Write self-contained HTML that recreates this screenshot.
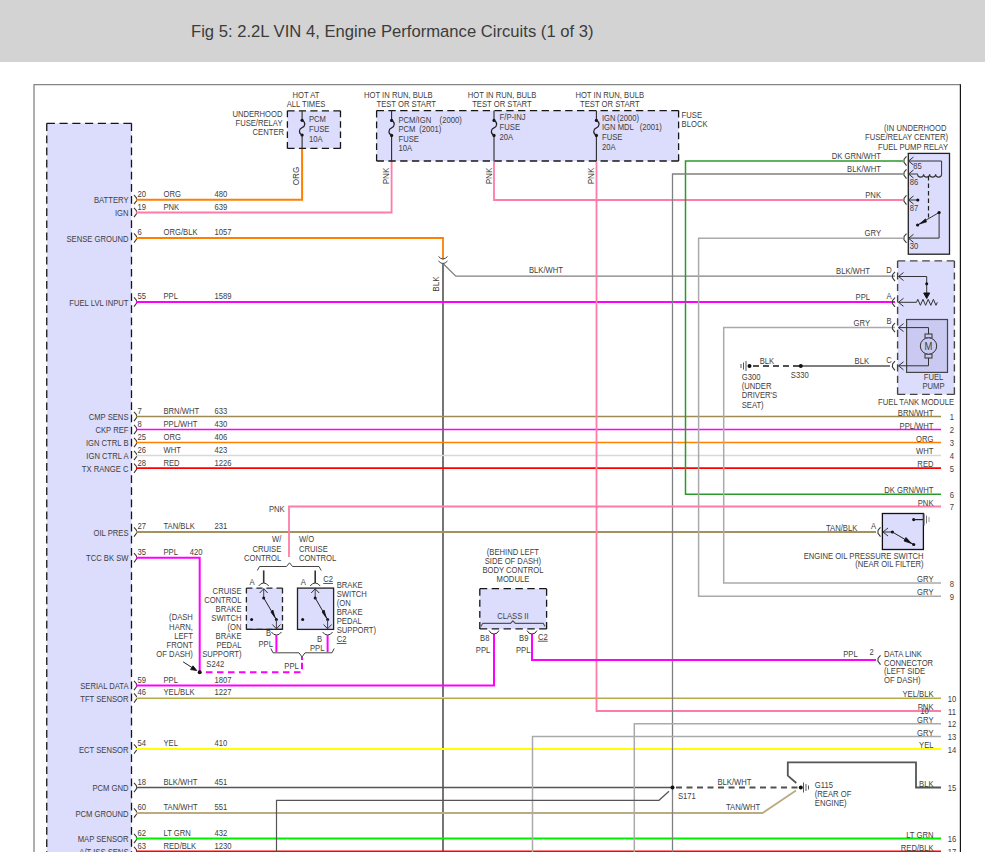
<!DOCTYPE html>
<html><head><meta charset="utf-8"><style>
html,body{margin:0;padding:0;background:#fff;width:985px;height:865px;overflow:hidden}
#hdr{position:absolute;left:0;top:0;width:985px;height:62px;background:#d3d3d3}
#ttl{position:absolute;left:191px;top:20.5px;font-family:"Liberation Sans",sans-serif;font-size:17.2px;color:#3c3c3c;white-space:nowrap;transform:scaleX(0.968);transform-origin:0 0}
svg{position:absolute;left:0;top:0}
svg text{font-family:"Liberation Sans",sans-serif;font-size:8.5px;fill:#404040}
</style></head><body>
<div id="hdr"></div>
<div id="ttl">Fig 5: 2.2L VIN 4, Engine Performance Circuits (1 of 3)</div>
<svg width="985" height="865" viewBox="0 0 985 865">
<defs><clipPath id="cp"><rect x="0" y="62" width="985" height="790"/></clipPath></defs>
<g clip-path="url(#cp)">
<path d="M34 900 L34 84.7 L960.4 84.7" fill="none" stroke="#858585" stroke-width="1.3"/>
<path d="M960.4 84.2 L960.4 900" fill="none" stroke="#151515" stroke-width="1.2"/>
<rect x="46.75" y="123.3" width="84.75" height="760" fill="#dcdcfd"/>
<path d="M46.75 123.3 L131.5 123.3" stroke="#161616" stroke-width="1.3" stroke-dasharray="8.127 4.644" fill="none"/>
<path d="M131.5 123.3 L131.5 883.3" stroke="#161616" stroke-width="1.3" stroke-dasharray="7.721 4.412" fill="none"/>
<path d="M131.5 883.3 L46.75 883.3" stroke="#161616" stroke-width="1.3" stroke-dasharray="8.127 4.644" fill="none"/>
<path d="M46.75 883.3 L46.75 123.3" stroke="#161616" stroke-width="1.3" stroke-dasharray="7.721 4.412" fill="none"/>
<text transform="translate(128.5 203.2) scale(0.9 1)" text-anchor="end">BATTERY</text>
<text transform="translate(137.5 196.9) scale(0.9 1)">20</text>
<text transform="translate(163.5 196.9) scale(0.9 1)">ORG</text>
<text transform="translate(214.5 196.9) scale(0.9 1)">480</text>
<path d="M134 195.0 L136.4 197.79999999999998 L136.6 200.79999999999998 L134 204.2" stroke="#3a3a3a" stroke-width="1.1" fill="none"/>
<text transform="translate(128.5 216.1) scale(0.9 1)" text-anchor="end">IGN</text>
<text transform="translate(137.5 209.8) scale(0.9 1)">19</text>
<text transform="translate(163.5 209.8) scale(0.9 1)">PNK</text>
<text transform="translate(214.5 209.8) scale(0.9 1)">639</text>
<path d="M134 207.9 L136.4 210.7 L136.6 213.7 L134 217.1" stroke="#3a3a3a" stroke-width="1.1" fill="none"/>
<text transform="translate(128.5 241.6) scale(0.9 1)" text-anchor="end">SENSE GROUND</text>
<text transform="translate(137.5 235.3) scale(0.9 1)">6</text>
<text transform="translate(163.5 235.3) scale(0.9 1)">ORG/BLK</text>
<text transform="translate(214.5 235.3) scale(0.9 1)">1057</text>
<path d="M134 233.4 L136.4 236.2 L136.6 239.2 L134 242.6" stroke="#3a3a3a" stroke-width="1.1" fill="none"/>
<text transform="translate(128.5 305.6) scale(0.9 1)" text-anchor="end">FUEL LVL INPUT</text>
<text transform="translate(137.5 299.3) scale(0.9 1)">55</text>
<text transform="translate(163.5 299.3) scale(0.9 1)">PPL</text>
<text transform="translate(214.5 299.3) scale(0.9 1)">1589</text>
<path d="M134 297.4 L136.4 300.2 L136.6 303.2 L134 306.6" stroke="#3a3a3a" stroke-width="1.1" fill="none"/>
<text transform="translate(128.5 420.1) scale(0.9 1)" text-anchor="end">CMP SENS</text>
<text transform="translate(137.5 413.8) scale(0.9 1)">7</text>
<text transform="translate(163.5 413.8) scale(0.9 1)">BRN/WHT</text>
<text transform="translate(214.5 413.8) scale(0.9 1)">633</text>
<path d="M134 411.9 L136.4 414.7 L136.6 417.7 L134 421.1" stroke="#3a3a3a" stroke-width="1.1" fill="none"/>
<text transform="translate(128.5 433.1) scale(0.9 1)" text-anchor="end">CKP REF</text>
<text transform="translate(137.5 426.8) scale(0.9 1)">8</text>
<text transform="translate(163.5 426.8) scale(0.9 1)">PPL/WHT</text>
<text transform="translate(214.5 426.8) scale(0.9 1)">430</text>
<path d="M134 424.9 L136.4 427.7 L136.6 430.7 L134 434.1" stroke="#3a3a3a" stroke-width="1.1" fill="none"/>
<text transform="translate(128.5 446.1) scale(0.9 1)" text-anchor="end">IGN CTRL B</text>
<text transform="translate(137.5 439.8) scale(0.9 1)">25</text>
<text transform="translate(163.5 439.8) scale(0.9 1)">ORG</text>
<text transform="translate(214.5 439.8) scale(0.9 1)">406</text>
<path d="M134 437.9 L136.4 440.7 L136.6 443.7 L134 447.1" stroke="#3a3a3a" stroke-width="1.1" fill="none"/>
<text transform="translate(128.5 459.1) scale(0.9 1)" text-anchor="end">IGN CTRL A</text>
<text transform="translate(137.5 452.8) scale(0.9 1)">26</text>
<text transform="translate(163.5 452.8) scale(0.9 1)">WHT</text>
<text transform="translate(214.5 452.8) scale(0.9 1)">423</text>
<path d="M134 450.9 L136.4 453.7 L136.6 456.7 L134 460.1" stroke="#3a3a3a" stroke-width="1.1" fill="none"/>
<text transform="translate(128.5 471.8) scale(0.9 1)" text-anchor="end">TX RANGE C</text>
<text transform="translate(137.5 465.5) scale(0.9 1)">28</text>
<text transform="translate(163.5 465.5) scale(0.9 1)">RED</text>
<text transform="translate(214.5 465.5) scale(0.9 1)">1226</text>
<path d="M134 463.59999999999997 L136.4 466.4 L136.6 469.4 L134 472.8" stroke="#3a3a3a" stroke-width="1.1" fill="none"/>
<text transform="translate(128.5 535.6) scale(0.9 1)" text-anchor="end">OIL PRES</text>
<text transform="translate(137.5 529.3) scale(0.9 1)">27</text>
<text transform="translate(163.5 529.3) scale(0.9 1)">TAN/BLK</text>
<text transform="translate(214.5 529.3) scale(0.9 1)">231</text>
<path d="M134 527.4 L136.4 530.2 L136.6 533.2 L134 536.6" stroke="#3a3a3a" stroke-width="1.1" fill="none"/>
<text transform="translate(128.5 561.3000000000001) scale(0.9 1)" text-anchor="end">TCC BK SW</text>
<text transform="translate(137.5 555.0) scale(0.9 1)">35</text>
<text transform="translate(163.5 555.0) scale(0.9 1)">PPL</text>
<text transform="translate(189.7 555.0) scale(0.9 1)">420</text>
<path d="M134 553.1 L136.4 555.9000000000001 L136.6 558.9000000000001 L134 562.3000000000001" stroke="#3a3a3a" stroke-width="1.1" fill="none"/>
<text transform="translate(128.5 689.1) scale(0.9 1)" text-anchor="end">SERIAL DATA</text>
<text transform="translate(137.5 682.8) scale(0.9 1)">59</text>
<text transform="translate(163.5 682.8) scale(0.9 1)">PPL</text>
<text transform="translate(214.5 682.8) scale(0.9 1)">1807</text>
<path d="M134 680.9 L136.4 683.7 L136.6 686.7 L134 690.1" stroke="#3a3a3a" stroke-width="1.1" fill="none"/>
<text transform="translate(128.5 701.6) scale(0.9 1)" text-anchor="end">TFT SENSOR</text>
<text transform="translate(137.5 695.3) scale(0.9 1)">46</text>
<text transform="translate(163.5 695.3) scale(0.9 1)">YEL/BLK</text>
<text transform="translate(214.5 695.3) scale(0.9 1)">1227</text>
<path d="M134 693.4 L136.4 696.2 L136.6 699.2 L134 702.6" stroke="#3a3a3a" stroke-width="1.1" fill="none"/>
<text transform="translate(128.5 752.6) scale(0.9 1)" text-anchor="end">ECT SENSOR</text>
<text transform="translate(137.5 746.3) scale(0.9 1)">54</text>
<text transform="translate(163.5 746.3) scale(0.9 1)">YEL</text>
<text transform="translate(214.5 746.3) scale(0.9 1)">410</text>
<path d="M134 744.4 L136.4 747.2 L136.6 750.2 L134 753.6" stroke="#3a3a3a" stroke-width="1.1" fill="none"/>
<text transform="translate(128.5 791.1) scale(0.9 1)" text-anchor="end">PCM GND</text>
<text transform="translate(137.5 784.8) scale(0.9 1)">18</text>
<text transform="translate(163.5 784.8) scale(0.9 1)">BLK/WHT</text>
<text transform="translate(214.5 784.8) scale(0.9 1)">451</text>
<path d="M134 782.9 L136.4 785.7 L136.6 788.7 L134 792.1" stroke="#3a3a3a" stroke-width="1.1" fill="none"/>
<text transform="translate(128.5 816.6) scale(0.9 1)" text-anchor="end">PCM GROUND</text>
<text transform="translate(137.5 810.3) scale(0.9 1)">60</text>
<text transform="translate(163.5 810.3) scale(0.9 1)">TAN/WHT</text>
<text transform="translate(214.5 810.3) scale(0.9 1)">551</text>
<path d="M134 808.4 L136.4 811.2 L136.6 814.2 L134 817.6" stroke="#3a3a3a" stroke-width="1.1" fill="none"/>
<text transform="translate(128.5 842.1) scale(0.9 1)" text-anchor="end">MAP SENSOR</text>
<text transform="translate(137.5 835.8) scale(0.9 1)">62</text>
<text transform="translate(163.5 835.8) scale(0.9 1)">LT GRN</text>
<text transform="translate(214.5 835.8) scale(0.9 1)">432</text>
<path d="M134 833.9 L136.4 836.7 L136.6 839.7 L134 843.1" stroke="#3a3a3a" stroke-width="1.1" fill="none"/>
<text transform="translate(128.5 855.1) scale(0.9 1)" text-anchor="end">A/T ISS SENS</text>
<text transform="translate(137.5 848.8) scale(0.9 1)">63</text>
<text transform="translate(163.5 848.8) scale(0.9 1)">RED/BLK</text>
<text transform="translate(214.5 848.8) scale(0.9 1)">1230</text>
<path d="M134 846.9 L136.4 849.7 L136.6 852.7 L134 856.1" stroke="#3a3a3a" stroke-width="1.1" fill="none"/>
<path d="M136 199.8 L302.1 199.8 L302.1 148.5" stroke="#ff8000" stroke-width="2" fill="none"/>
<path d="M136 212.5 L391.6 212.5 L391.6 161" stroke="#ff7ca6" stroke-width="1.8" fill="none"/>
<path d="M136 238 L443 238 L443 259.5" stroke="#ff8000" stroke-width="1.8" fill="none"/>
<path d="M443 264 L443 852" stroke="#666" stroke-width="1.8" fill="none"/>
<path d="M443.5 264 L455.8 276.2 L895 276.2" stroke="#808080" stroke-width="1.3" fill="none"/>
<path d="M136 302 L895 302" stroke="#ff00ff" stroke-width="2" fill="none"/>
<path d="M136 416.5 L941 416.5" stroke="#9e8a55" stroke-width="1.5" fill="none"/>
<path d="M136 429.5 L941 429.5" stroke="#ff00ff" stroke-width="1.4" fill="none"/>
<path d="M136 442.5 L941 442.5" stroke="#ff8000" stroke-width="1.7" fill="none"/>
<path d="M136 455.5 L941 455.5" stroke="#d8d8d8" stroke-width="1.5" fill="none"/>
<path d="M136 468.2 L941 468.2" stroke="#ff0000" stroke-width="1.8" fill="none"/>
<path d="M136 532 L876 532" stroke="#a4915f" stroke-width="1.8" fill="none"/>
<path d="M136 557.7 L199.7 557.7 L199.7 672.3" stroke="#ff00ff" stroke-width="2" fill="none"/>
<path d="M136 685.5 L494 685.5 L494 634" stroke="#ff00ff" stroke-width="2" fill="none"/>
<path d="M136 697.5 L941 697.5" stroke="#ece23c" stroke-width="1.1" fill="none"/>
<path d="M136 698.5 L941 698.5" stroke="#b4aa48" stroke-width="1.0" fill="none"/>
<path d="M136 749 L941 749" stroke="#ffff00" stroke-width="2" fill="none"/>
<path d="M136 787.5 L672.5 787.5" stroke="#555555" stroke-width="1.3" fill="none"/>
<path d="M136 813 L762.5 813 L796 790.5" stroke="#bcab80" stroke-width="1.8" fill="none"/>
<path d="M136 838.5 L941 838.5" stroke="#00f000" stroke-width="2" fill="none"/>
<path d="M136 851.5 L941 851.5" stroke="#ff0000" stroke-width="2" fill="none"/>
<path d="M494 161 L494 200 L903 200" stroke="#ff7ca6" stroke-width="1.8" fill="none"/>
<path d="M596.5 161 L596.5 711 L941 711" stroke="#ff7ca6" stroke-width="1.8" fill="none"/>
<path d="M903 161 L685.5 161 L685.5 494.3 L941 494.3" stroke="#2a9a2a" stroke-width="1.5" fill="none"/>
<path d="M903 174 L672.5 174 L672.5 852" stroke="#808080" stroke-width="1.3" fill="none"/>
<path d="M903 238.3 L698.6 238.3 L698.6 596.3 L941 596.3" stroke="#aaaaaa" stroke-width="1.5" fill="none"/>
<path d="M895 327.6 L723.7 327.6 L723.7 583.1 L941 583.1" stroke="#aaaaaa" stroke-width="1.5" fill="none"/>
<path d="M289 557 L289 506.5 L941 506.5" stroke="#ff7ca6" stroke-width="1.8" fill="none"/>
<path d="M634.3 852 L634.3 723.7 L941 723.7" stroke="#aaaaaa" stroke-width="1.5" fill="none"/>
<path d="M532.5 852 L532.5 736.5 L941 736.5" stroke="#aaaaaa" stroke-width="1.5" fill="none"/>
<path d="M532 634 L532 660 L876 660" stroke="#ff00ff" stroke-width="2" fill="none"/>
<path d="M941 787.5 L916 787.5 L916 762.3 L787.8 762.3 L787.8 775.7 L796.3 783" stroke="#555555" stroke-width="1.8" fill="none"/>
<path d="M676 787.5 L800.8 787.5" stroke="#505050" stroke-width="1.8" fill="none" stroke-dasharray="6 4.5"/>
<path d="M276.5 852 L276.5 800.3 L659 800.3 L669 791.3" stroke="#555555" stroke-width="1.2" fill="none"/>
<path d="M753 366 L800.8 366" stroke="#505050" stroke-width="1.8" fill="none" stroke-dasharray="6 4"/>
<path d="M800.8 366 L890 366" stroke="#555555" stroke-width="1.6" fill="none"/>
<circle cx="672.5" cy="787.5" r="2" fill="#111"/>
<circle cx="800.8" cy="787.5" r="2" fill="#111"/>
<circle cx="749.5" cy="366" r="2" fill="#111"/>
<circle cx="800.8" cy="366" r="2" fill="#111"/>
<circle cx="199.7" cy="672.3" r="2" fill="#111"/>
<path d="M206 672.3 L302 672.3 L302 660" stroke="#ff00ff" stroke-width="2" fill="none" stroke-dasharray="6.5 4.5"/>
<rect x="287.4" y="110.8" width="53.1" height="37.6" fill="#dcdcfd"/>
<path d="M287.4 110.8 L340.5 110.8" stroke="#161616" stroke-width="1.3" stroke-dasharray="7.176 4.305" fill="none"/>
<path d="M340.5 110.8 L340.5 148.4" stroke="#161616" stroke-width="1.3" stroke-dasharray="6.483 3.890" fill="none"/>
<path d="M340.5 148.4 L287.4 148.4" stroke="#161616" stroke-width="1.3" stroke-dasharray="7.176 4.305" fill="none"/>
<path d="M287.4 148.4 L287.4 110.8" stroke="#161616" stroke-width="1.3" stroke-dasharray="6.483 3.890" fill="none"/>
<path d="M302.1 110.8 L302.1 120.3" stroke="#2a2a2a" stroke-width="1.1" fill="none"/>
<path d="M302.1 135 L302.1 148.4" stroke="#2a2a2a" stroke-width="1.1" fill="none"/>
<circle cx="302.1" cy="120.3" r="1.6" fill="#111"/>
<circle cx="302.1" cy="135" r="1.6" fill="#111"/>
<path d="M302.1 120.3 C306.1 122.3 305.1 126.65 302.1 127.65 C299.1 128.65 298.1 133 302.1 135" stroke="#222" stroke-width="1.2" fill="none"/>
<text transform="translate(309 122.4) scale(0.9 1)">PCM</text>
<text transform="translate(309 132.0) scale(0.9 1)">FUSE</text>
<text transform="translate(309 141.6) scale(0.9 1)">10A</text>
<text transform="translate(306 97.8) scale(0.9 1)" text-anchor="middle">HOT AT</text>
<text transform="translate(306 106.9) scale(0.9 1)" text-anchor="middle">ALL TIMES</text>
<text transform="translate(282.5 116.9) scale(0.9 1)" text-anchor="end">UNDERHOOD</text>
<text transform="translate(282.5 126.0) scale(0.9 1)" text-anchor="end">FUSE/RELAY</text>
<text transform="translate(284 135) scale(0.9 1)" text-anchor="end">CENTER</text>
<rect x="376.6" y="110.6" width="302" height="50.4" fill="#dcdcfd"/>
<path d="M376.6 110.6 L678.6 110.6" stroke="#161616" stroke-width="1.3" stroke-dasharray="7.366 4.420" fill="none"/>
<path d="M678.6 110.6 L678.6 161.0" stroke="#161616" stroke-width="1.3" stroke-dasharray="6.811 4.086" fill="none"/>
<path d="M678.6 161.0 L376.6 161.0" stroke="#161616" stroke-width="1.3" stroke-dasharray="7.366 4.420" fill="none"/>
<path d="M376.6 161.0 L376.6 110.6" stroke="#161616" stroke-width="1.3" stroke-dasharray="6.811 4.086" fill="none"/>
<path d="M391.6 110.6 L391.6 120.4" stroke="#2a2a2a" stroke-width="1.1" fill="none"/>
<path d="M391.6 135.4 L391.6 161" stroke="#2a2a2a" stroke-width="1.1" fill="none"/>
<circle cx="391.6" cy="120.4" r="1.6" fill="#111"/>
<circle cx="391.6" cy="135.4" r="1.6" fill="#111"/>
<path d="M391.6 120.4 C395.6 122.4 394.6 126.9 391.6 127.9 C388.6 128.9 387.6 133.4 391.6 135.4" stroke="#222" stroke-width="1.2" fill="none"/>
<path d="M494 110.6 L494 120.4" stroke="#2a2a2a" stroke-width="1.1" fill="none"/>
<path d="M494 135.4 L494 161" stroke="#2a2a2a" stroke-width="1.1" fill="none"/>
<circle cx="494" cy="120.4" r="1.6" fill="#111"/>
<circle cx="494" cy="135.4" r="1.6" fill="#111"/>
<path d="M494 120.4 C498 122.4 497 126.9 494 127.9 C491 128.9 490 133.4 494 135.4" stroke="#222" stroke-width="1.2" fill="none"/>
<path d="M596.4 110.6 L596.4 120.4" stroke="#2a2a2a" stroke-width="1.1" fill="none"/>
<path d="M596.4 135.4 L596.4 161" stroke="#2a2a2a" stroke-width="1.1" fill="none"/>
<circle cx="596.4" cy="120.4" r="1.6" fill="#111"/>
<circle cx="596.4" cy="135.4" r="1.6" fill="#111"/>
<path d="M596.4 120.4 C600.4 122.4 599.4 126.9 596.4 127.9 C593.4 128.9 592.4 133.4 596.4 135.4" stroke="#222" stroke-width="1.2" fill="none"/>
<text transform="translate(398.5 122.6) scale(0.9 1)">PCM/IGN</text>
<text transform="translate(398.5 132.2) scale(0.9 1)">PCM</text>
<text transform="translate(398.5 141.8) scale(0.9 1)">FUSE</text>
<text transform="translate(398.5 151.4) scale(0.9 1)">10A</text>
<text transform="translate(439.6 122.6) scale(0.9 1)">(2000)</text>
<text transform="translate(419.2 132.2) scale(0.9 1)">(2001)</text>
<text transform="translate(499.6 120.4) scale(0.9 1)">F/P-INJ</text>
<text transform="translate(499.6 130.2) scale(0.9 1)">FUSE</text>
<text transform="translate(499.6 140.0) scale(0.9 1)">20A</text>
<text transform="translate(602 120.8) scale(0.9 1)">IGN</text>
<text transform="translate(602 130.37) scale(0.9 1)">IGN MDL</text>
<text transform="translate(602 139.94) scale(0.9 1)">FUSE</text>
<text transform="translate(602 149.51) scale(0.9 1)">20A</text>
<text transform="translate(617 120.8) scale(0.9 1)">(2000)</text>
<text transform="translate(639.7 130.4) scale(0.9 1)">(2001)</text>
<text transform="translate(681.6 117.7) scale(0.9 1)">FUSE</text>
<text transform="translate(681.6 126.5) scale(0.9 1)">BLOCK</text>
<text transform="translate(364 98) scale(0.9 1)">HOT IN RUN, BULB</text>
<text transform="translate(376.5 106.8) scale(0.9 1)">TEST OR START</text>
<text transform="translate(467.8 98) scale(0.9 1)">HOT IN RUN, BULB</text>
<text transform="translate(472.2 106.8) scale(0.9 1)">TEST OR START</text>
<text transform="translate(575.4 98) scale(0.9 1)">HOT IN RUN, BULB</text>
<text transform="translate(580.1 106.8) scale(0.9 1)">TEST OR START</text>
<text transform="translate(299 176) rotate(-90) scale(0.9 1)" text-anchor="middle" style="font-size:9px">ORG</text>
<text transform="translate(389 176) rotate(-90) scale(0.9 1)" text-anchor="middle" style="font-size:9px">PNK</text>
<text transform="translate(491.5 176) rotate(-90) scale(0.9 1)" text-anchor="middle" style="font-size:9px">PNK</text>
<text transform="translate(594 176) rotate(-90) scale(0.9 1)" text-anchor="middle" style="font-size:9px">PNK</text>
<text transform="translate(439 284) rotate(-90) scale(0.9 1)" text-anchor="middle" style="font-size:9px">BLK</text>
<path d="M438.5 256.5 Q443 261.5 447.5 256.5" stroke="#444" stroke-width="1" fill="none"/>
<path d="M438.5 261 Q443 266 447.5 261" stroke="#444" stroke-width="1" fill="none"/>
<text transform="translate(529 273.3) scale(0.9 1)">BLK/WHT</text>
<text transform="translate(946.5 130.9) scale(0.9 1)" text-anchor="end">(IN UNDERHOOD</text>
<text transform="translate(948 140.4) scale(0.9 1)" text-anchor="end">FUSE/RELAY CENTER)</text>
<text transform="translate(948 150.2) scale(0.9 1)" text-anchor="end">FUEL PUMP RELAY</text>
<rect x="908.3" y="153.4" width="41.2" height="100.8" fill="#dcdcfd" stroke="#222" stroke-width="1.3"/>
<path d="M906.5 156.4 L904.1 159.2 L903.9 162.2 L906.5 165.6" stroke="#3a3a3a" stroke-width="1.1" fill="none"/>
<path d="M913.5 157 L908.5 161 L913.5 165" stroke="#333" stroke-width="1" fill="none"/>
<path d="M906.5 169.4 L904.1 172.2 L903.9 175.2 L906.5 178.6" stroke="#3a3a3a" stroke-width="1.1" fill="none"/>
<path d="M913.5 170 L908.5 174 L913.5 178" stroke="#333" stroke-width="1" fill="none"/>
<path d="M906.5 195.4 L904.1 198.2 L903.9 201.2 L906.5 204.6" stroke="#3a3a3a" stroke-width="1.1" fill="none"/>
<path d="M913.5 196 L908.5 200 L913.5 204" stroke="#333" stroke-width="1" fill="none"/>
<path d="M906.5 233.70000000000002 L904.1 236.5 L903.9 239.5 L906.5 242.9" stroke="#3a3a3a" stroke-width="1.1" fill="none"/>
<path d="M913.5 234.3 L908.5 238.3 L913.5 242.3" stroke="#333" stroke-width="1" fill="none"/>
<path d="M908.5 161 L941.6 161 L941.6 174.5" stroke="#333" stroke-width="1" fill="none"/>
<path d="M908.5 174 L917.8 174" stroke="#333" stroke-width="1" fill="none"/>
<path d="M917.6 174.3 a3 2.8 0 0 0 6 0 a3 2.8 0 0 0 6 0 a3 2.8 0 0 0 6 0 a3 2.8 0 0 0 6 0" stroke="#333" stroke-width="1.1" fill="none"/>
<path d="M928.5 176 L928.5 217.5" stroke="#222" stroke-width="1.2" fill="none" stroke-dasharray="4.5 3"/>
<path d="M908.5 200 L917.8 200" stroke="#333" stroke-width="1" fill="none"/>
<circle cx="917.8" cy="200" r="1.6" fill="#111"/>
<path d="M917.6 225 L939.1 212.5 L939.1 238.1 L908.5 238.1" stroke="#333" stroke-width="1" fill="none"/>
<circle cx="917.6" cy="225" r="1.6" fill="#111"/>
<circle cx="939.1" cy="212.5" r="1.6" fill="#111"/>
<path d="M919.5 224 L925.5 218.8 L926.5 222 Z" stroke="#111" stroke-width="0.6" fill="#111"/>
<text transform="translate(913.3 169.4) scale(0.9 1)">85</text>
<text transform="translate(909.7 185.3) scale(0.9 1)">86</text>
<text transform="translate(909.7 211.3) scale(0.9 1)">87</text>
<text transform="translate(909.7 249) scale(0.9 1)">30</text>
<text transform="translate(881 159.4) scale(0.9 1)" text-anchor="end">DK GRN/WHT</text>
<text transform="translate(881 172) scale(0.9 1)" text-anchor="end">BLK/WHT</text>
<text transform="translate(881 198) scale(0.9 1)" text-anchor="end">PNK</text>
<text transform="translate(881 236.4) scale(0.9 1)" text-anchor="end">GRY</text>
<rect x="897.6" y="260.9" width="56.8" height="133.5" fill="#dcdcfd"/>
<path d="M897.6 260.9 L954.4 260.9" stroke="#444" stroke-width="1.4" stroke-dasharray="7.676 4.605" fill="none"/>
<path d="M954.4 260.9 L954.4 394.4" stroke="#444" stroke-width="1.4" stroke-dasharray="7.177 4.306" fill="none"/>
<path d="M954.4 394.4 L897.6 394.4" stroke="#444" stroke-width="1.4" stroke-dasharray="7.676 4.605" fill="none"/>
<path d="M897.6 394.4 L897.6 260.9" stroke="#444" stroke-width="1.4" stroke-dasharray="7.177 4.306" fill="none"/>
<rect x="906.6" y="319.5" width="40.9" height="52.9" fill="#c9c9f2" stroke="#444" stroke-width="1.2"/>
<path d="M895 271.9 L892.6 274.7 L892.4 277.7 L895 281.1" stroke="#3a3a3a" stroke-width="1.1" fill="none"/>
<path d="M903.5 272.5 L898.5 276.5 L903.5 280.5" stroke="#333" stroke-width="1" fill="none"/>
<text transform="translate(889 273.3) scale(0.9 1)" text-anchor="middle">D</text>
<path d="M895 297.7 L892.6 300.5 L892.4 303.5 L895 306.90000000000003" stroke="#3a3a3a" stroke-width="1.1" fill="none"/>
<path d="M903.5 298.3 L898.5 302.3 L903.5 306.3" stroke="#333" stroke-width="1" fill="none"/>
<text transform="translate(889 299.1) scale(0.9 1)" text-anchor="middle">A</text>
<path d="M895 323.0 L892.6 325.8 L892.4 328.8 L895 332.20000000000005" stroke="#3a3a3a" stroke-width="1.1" fill="none"/>
<path d="M903.5 323.6 L898.5 327.6 L903.5 331.6" stroke="#333" stroke-width="1" fill="none"/>
<text transform="translate(889 324.40000000000003) scale(0.9 1)" text-anchor="middle">B</text>
<path d="M895 361.2 L892.6 364.0 L892.4 367.0 L895 370.40000000000003" stroke="#3a3a3a" stroke-width="1.1" fill="none"/>
<path d="M903.5 361.8 L898.5 365.8 L903.5 369.8" stroke="#333" stroke-width="1" fill="none"/>
<text transform="translate(889 362.6) scale(0.9 1)" text-anchor="middle">C</text>
<path d="M898.5 276.5 L926.7 276.5 L926.7 296" stroke="#333" stroke-width="1" fill="none"/>
<circle cx="926.7" cy="283.7" r="1.5" fill="#111"/>
<path d="M923.7 293 L926.7 298.5 L929.7 293 Z" stroke="#111" stroke-width="1" fill="#111"/>
<path d="M898.5 302.3 L916.5 302.3" stroke="#333" stroke-width="1" fill="none"/>
<path d="M916.5 302.3 l1.3 -3 l2.6 6 l2.6 -6 l2.6 6 l2.6 -6 l2.6 6 l2.6 -6 l2.6 6 l1.3 -3" stroke="#333" stroke-width="1" fill="none"/>
<path d="M898.5 327.6 L928.5 327.6 L928.5 334" stroke="#333" stroke-width="1" fill="none"/>
<path d="M898.5 365.8 L928.5 365.8 L928.5 358" stroke="#333" stroke-width="1" fill="none"/>
<rect x="925" y="334" width="7" height="4" fill="none" stroke="#333" stroke-width="1"/>
<rect x="925" y="354" width="7" height="4" fill="none" stroke="#333" stroke-width="1"/>
<circle cx="928.5" cy="346" r="8.2" fill="#c9c9f2" stroke="#333" stroke-width="1"/>
<text transform="translate(928.5 350) scale(0.9 1)" text-anchor="middle" style="font-size:10.5px">M</text>
<text transform="translate(933.5 380.0) scale(0.9 1)" text-anchor="middle">FUEL</text>
<text transform="translate(933.5 388.5) scale(0.9 1)" text-anchor="middle">PUMP</text>
<text transform="translate(954 404.6) scale(0.9 1)" text-anchor="end">FUEL TANK MODULE</text>
<text transform="translate(870 274) scale(0.9 1)" text-anchor="end">BLK/WHT</text>
<text transform="translate(870 300) scale(0.9 1)" text-anchor="end">PPL</text>
<text transform="translate(870 325.5) scale(0.9 1)" text-anchor="end">GRY</text>
<text transform="translate(869 363.5) scale(0.9 1)" text-anchor="end">BLK</text>
<path d="M746 361 L746 371" stroke="#555" stroke-width="1" fill="none"/>
<path d="M743.5 362.5 L743.5 369.5" stroke="#555" stroke-width="1" fill="none"/>
<path d="M741 364 L741 368" stroke="#555" stroke-width="1" fill="none"/>
<text transform="translate(759.7 363.5) scale(0.9 1)">BLK</text>
<text transform="translate(790.8 377.6) scale(0.9 1)">S330</text>
<text transform="translate(741.7 380.2) scale(0.9 1)">G300</text>
<text transform="translate(741.7 389.3) scale(0.9 1)">(UNDER</text>
<text transform="translate(741.7 398.4) scale(0.9 1)">DRIVER'S</text>
<text transform="translate(741.7 407.5) scale(0.9 1)">SEAT)</text>
<text transform="translate(933.5 415.5) scale(0.9 1)" text-anchor="end">BRN/WHT</text>
<text transform="translate(952 420.0) scale(0.9 1)" text-anchor="middle">1</text>
<text transform="translate(933.5 428.6) scale(0.9 1)" text-anchor="end">PPL/WHT</text>
<text transform="translate(952 433.1) scale(0.9 1)" text-anchor="middle">2</text>
<text transform="translate(933.5 441.5) scale(0.9 1)" text-anchor="end">ORG</text>
<text transform="translate(952 446.0) scale(0.9 1)" text-anchor="middle">3</text>
<text transform="translate(933.5 454.1) scale(0.9 1)" text-anchor="end">WHT</text>
<text transform="translate(952 458.6) scale(0.9 1)" text-anchor="middle">4</text>
<text transform="translate(933.5 467.2) scale(0.9 1)" text-anchor="end">RED</text>
<text transform="translate(952 471.7) scale(0.9 1)" text-anchor="middle">5</text>
<text transform="translate(933.5 493.3) scale(0.9 1)" text-anchor="end">DK GRN/WHT</text>
<text transform="translate(952 497.8) scale(0.9 1)" text-anchor="middle">6</text>
<text transform="translate(933.5 505.5) scale(0.9 1)" text-anchor="end">PNK</text>
<text transform="translate(952 510.0) scale(0.9 1)" text-anchor="middle">7</text>
<text transform="translate(933.5 582.1) scale(0.9 1)" text-anchor="end">GRY</text>
<text transform="translate(952 586.6) scale(0.9 1)" text-anchor="middle">8</text>
<text transform="translate(933.5 595.3) scale(0.9 1)" text-anchor="end">GRY</text>
<text transform="translate(952 599.8) scale(0.9 1)" text-anchor="middle">9</text>
<text transform="translate(933.5 697.0) scale(0.9 1)" text-anchor="end">YEL/BLK</text>
<text transform="translate(952 701.5) scale(0.9 1)" text-anchor="middle">10</text>
<text transform="translate(933.5 710.0) scale(0.9 1)" text-anchor="end">PNK</text>
<text transform="translate(952 714.5) scale(0.9 1)" text-anchor="middle">11</text>
<text transform="translate(933.5 722.7) scale(0.9 1)" text-anchor="end">GRY</text>
<text transform="translate(952 727.2) scale(0.9 1)" text-anchor="middle">12</text>
<text transform="translate(933.5 735.5) scale(0.9 1)" text-anchor="end">GRY</text>
<text transform="translate(952 740.0) scale(0.9 1)" text-anchor="middle">13</text>
<text transform="translate(933.5 748.2) scale(0.9 1)" text-anchor="end">YEL</text>
<text transform="translate(952 752.7) scale(0.9 1)" text-anchor="middle">14</text>
<text transform="translate(933.5 786.5) scale(0.9 1)" text-anchor="end">BLK</text>
<text transform="translate(952 791.0) scale(0.9 1)" text-anchor="middle">15</text>
<text transform="translate(933.5 837.5) scale(0.9 1)" text-anchor="end">LT GRN</text>
<text transform="translate(952 842.0) scale(0.9 1)" text-anchor="middle">16</text>
<text transform="translate(933.5 850.5) scale(0.9 1)" text-anchor="end">RED/BLK</text>
<text transform="translate(952 855.0) scale(0.9 1)" text-anchor="middle">17</text>
<text transform="translate(920.2 713.8) scale(0.9 1)">10</text>
<rect x="882.4" y="513.5" width="41" height="36" fill="#dcdcfd" stroke="#111" stroke-width="1.3"/>
<path d="M880.5 527.4 L878.1 530.2 L877.9 533.2 L880.5 536.6" stroke="#3a3a3a" stroke-width="1.1" fill="none"/>
<path d="M888 528 L883 532 L888 536" stroke="#333" stroke-width="1" fill="none"/>
<path d="M883 532 L892.4 532" stroke="#333" stroke-width="1" fill="none"/>
<circle cx="892.4" cy="532" r="1.6" fill="#111"/>
<path d="M892.4 532 L913.7 544.5" stroke="#222" stroke-width="1" fill="none"/>
<path d="M906 537.5 L911.5 543.5 L904 541 Z" stroke="#111" stroke-width="0.8" fill="#111"/>
<circle cx="913.7" cy="544.5" r="1.6" fill="#111"/>
<circle cx="913.7" cy="519.6" r="1.6" fill="#111"/>
<path d="M913.7 519.6 L924 519.6" stroke="#222" stroke-width="1.2" fill="none"/>
<path d="M924 513.5 L924 525.5" stroke="#555" stroke-width="1.2" fill="none"/>
<path d="M926.5 515.5 L926.5 523.5" stroke="#777" stroke-width="1" fill="none"/>
<path d="M929 517 L929 522" stroke="#999" stroke-width="1" fill="none"/>
<text transform="translate(826 530.6) scale(0.9 1)">TAN/BLK</text>
<text transform="translate(871 529) scale(0.9 1)">A</text>
<text transform="translate(923.6 558.5) scale(0.9 1)" text-anchor="end">ENGINE OIL PRESSURE SWITCH</text>
<text transform="translate(923.6 567.2) scale(0.9 1)" text-anchor="end">(NEAR OIL FILTER)</text>
<text transform="translate(268.9 512.4) scale(0.9 1)">PNK</text>
<text transform="translate(281.3 542.4) scale(0.9 1)" text-anchor="end">W/</text>
<text transform="translate(281.3 551.7) scale(0.9 1)" text-anchor="end">CRUISE</text>
<text transform="translate(281.3 561.0) scale(0.9 1)" text-anchor="end">CONTROL</text>
<text transform="translate(298.9 542.4) scale(0.9 1)">W/O</text>
<text transform="translate(298.9 551.7) scale(0.9 1)">CRUISE</text>
<text transform="translate(298.9 561.0) scale(0.9 1)">CONTROL</text>
<path d="M257.3 570.5 L259.5 566.5 L286.5 566.5 L289.5 562.8 L292.5 566.5 L319 566.5 L321.2 570.5" stroke="#444" stroke-width="1" fill="none"/>
<path d="M270.9 648.5 L273 652.8 L299 652.8 L302 657 L305 652.8 L332 652.8 L334.2 648.5" stroke="#444" stroke-width="1" fill="none"/>
<path d="M302 657 L302 660" stroke="#ff00ff" stroke-width="2" fill="none"/>
<rect x="246.4" y="588.1" width="36.1" height="41.3" fill="#dcdcfd"/>
<path d="M246.4 588.1 L282.5 588.1" stroke="#222" stroke-width="1.3" stroke-dasharray="6.017 4.011" fill="none"/>
<path d="M282.5 588.1 L282.5 629.4" stroke="#222" stroke-width="1.3" stroke-dasharray="5.387 3.591" fill="none"/>
<path d="M282.5 629.4 L246.4 629.4" stroke="#222" stroke-width="1.3" stroke-dasharray="6.017 4.011" fill="none"/>
<path d="M246.4 629.4 L246.4 588.1" stroke="#222" stroke-width="1.3" stroke-dasharray="5.387 3.591" fill="none"/>
<path d="M263.7 570.4 L263.7 583" stroke="#333" stroke-width="1.6" fill="none"/>
<path d="M258.7 586 Q260.7 583 263.7 583 Q266.7 583 268.7 586" stroke="#333" stroke-width="1" fill="none"/>
<path d="M263.7 588.5 L263.7 597.9" stroke="#444" stroke-width="1" fill="none"/>
<path d="M259.7 593 L263.7 588.8 L267.7 593" stroke="#333" stroke-width="1" fill="none"/>
<circle cx="263.7" cy="597.9" r="1.5" fill="#111"/>
<path d="M263.7 597.9 L276.4 619.5" stroke="#222" stroke-width="1" fill="none"/>
<path d="M270.9 612 L274.9 617.5 L272.9 610 Z" stroke="#111" stroke-width="0.8" fill="#111"/>
<circle cx="276.4" cy="619.5" r="1.5" fill="#111"/>
<path d="M276.4 619.5 L276.4 628.8" stroke="#444" stroke-width="1" fill="none"/>
<path d="M272.4 624.5 L276.4 628.8 L280.4 624.5" stroke="#333" stroke-width="1" fill="none"/>
<circle cx="251.6" cy="619.5" r="1.5" fill="#111"/>
<path d="M271.4 632 Q273.4 635 276.4 635 Q279.4 635 281.4 632" stroke="#333" stroke-width="1" fill="none"/>
<path d="M276.4 635 L276.4 652" stroke="#ff00ff" stroke-width="2" fill="none"/>
<path d="M246.4 629.4 L282.5 629.4" stroke="#222" stroke-width="1.2" fill="none"/>
<rect x="297.5" y="588.1" width="36.1" height="41.3" fill="#dcdcfd" stroke="#222" stroke-width="1.3"/>
<path d="M315.2 570.4 L315.2 583" stroke="#333" stroke-width="1.6" fill="none"/>
<path d="M310.2 586 Q312.2 583 315.2 583 Q318.2 583 320.2 586" stroke="#333" stroke-width="1" fill="none"/>
<path d="M315.2 588.5 L315.2 597.9" stroke="#444" stroke-width="1" fill="none"/>
<path d="M311.2 593 L315.2 588.8 L319.2 593" stroke="#333" stroke-width="1" fill="none"/>
<circle cx="315.2" cy="597.9" r="1.5" fill="#111"/>
<path d="M315.2 597.9 L327.6 619.5" stroke="#222" stroke-width="1" fill="none"/>
<path d="M322.1 612 L326.1 617.5 L324.1 610 Z" stroke="#111" stroke-width="0.8" fill="#111"/>
<circle cx="327.6" cy="619.5" r="1.5" fill="#111"/>
<path d="M327.6 619.5 L327.6 628.8" stroke="#444" stroke-width="1" fill="none"/>
<path d="M323.6 624.5 L327.6 628.8 L331.6 624.5" stroke="#333" stroke-width="1" fill="none"/>
<circle cx="302.7" cy="619.5" r="1.5" fill="#111"/>
<path d="M322.6 632 Q324.6 635 327.6 635 Q330.6 635 332.6 632" stroke="#333" stroke-width="1" fill="none"/>
<path d="M327.6 635 L327.6 652" stroke="#ff00ff" stroke-width="2" fill="none"/>
<text transform="translate(252 584.9) scale(0.9 1)" text-anchor="middle">A</text>
<text transform="translate(303.4 584.5) scale(0.9 1)" text-anchor="middle">A</text>
<text transform="translate(323.2 582) scale(0.9 1)" text-decoration="underline">C2</text>
<text transform="translate(268.5 636.3) scale(0.9 1)" text-anchor="middle">B</text>
<text transform="translate(319.5 641.5) scale(0.9 1)" text-anchor="middle">B</text>
<text transform="translate(258.5 647.3) scale(0.9 1)">PPL</text>
<text transform="translate(310 651.3) scale(0.9 1)">PPL</text>
<text transform="translate(241.5 593.6) scale(0.9 1)" text-anchor="end">CRUISE</text>
<text transform="translate(241.5 602.7) scale(0.9 1)" text-anchor="end">CONTROL</text>
<text transform="translate(241.5 611.8) scale(0.9 1)" text-anchor="end">BRAKE</text>
<text transform="translate(241.5 620.9) scale(0.9 1)" text-anchor="end">SWITCH</text>
<text transform="translate(241.5 630.0) scale(0.9 1)" text-anchor="end">(ON</text>
<text transform="translate(241.5 639.1) scale(0.9 1)" text-anchor="end">BRAKE</text>
<text transform="translate(241.5 648.2) scale(0.9 1)" text-anchor="end">PEDAL</text>
<text transform="translate(241.5 657.3) scale(0.9 1)" text-anchor="end">SUPPORT)</text>
<text transform="translate(336.7 587.5) scale(0.9 1)">BRAKE</text>
<text transform="translate(336.7 596.6) scale(0.9 1)">SWITCH</text>
<text transform="translate(336.7 605.7) scale(0.9 1)">(ON</text>
<text transform="translate(336.7 614.8) scale(0.9 1)">BRAKE</text>
<text transform="translate(336.7 623.9) scale(0.9 1)">PEDAL</text>
<text transform="translate(336.7 633.0) scale(0.9 1)">SUPPORT)</text>
<text transform="translate(336.7 642) scale(0.9 1)" text-decoration="underline">C2</text>
<text transform="translate(192.9 620.4) scale(0.9 1)" text-anchor="end">(DASH</text>
<text transform="translate(192.9 629.5) scale(0.9 1)" text-anchor="end">HARN,</text>
<text transform="translate(192.9 638.6) scale(0.9 1)" text-anchor="end">LEFT</text>
<text transform="translate(192.9 647.7) scale(0.9 1)" text-anchor="end">FRONT</text>
<text transform="translate(192.9 656.8) scale(0.9 1)" text-anchor="end">OF DASH)</text>
<text transform="translate(206.3 667.1) scale(0.9 1)">S242</text>
<text transform="translate(284.3 669.1) scale(0.9 1)">PPL</text>
<path d="M183.1 661.8 L195 669.5" stroke="#222" stroke-width="1" fill="none"/>
<path d="M196.8 670.6 L190.5 669.6 L193 665.8 Z" stroke="#111" stroke-width="0.8" fill="#111"/>
<text transform="translate(512.9 554.5) scale(0.9 1)" text-anchor="middle">(BEHIND LEFT</text>
<text transform="translate(512.9 563.6) scale(0.9 1)" text-anchor="middle">SIDE OF DASH)</text>
<text transform="translate(512.9 572.7) scale(0.9 1)" text-anchor="middle">BODY CONTROL</text>
<text transform="translate(512.9 581.8) scale(0.9 1)" text-anchor="middle">MODULE</text>
<rect x="479.8" y="588.7" width="66.8" height="40.2" fill="#dcdcfd"/>
<path d="M479.8 588.7 L546.6 588.7" stroke="#161616" stroke-width="1.3" stroke-dasharray="7.422 4.453" fill="none"/>
<path d="M546.6 588.7 L546.6 628.9000000000001" stroke="#161616" stroke-width="1.3" stroke-dasharray="6.931 4.159" fill="none"/>
<path d="M546.6 628.9000000000001 L479.8 628.9000000000001" stroke="#161616" stroke-width="1.3" stroke-dasharray="7.422 4.453" fill="none"/>
<path d="M479.8 628.9000000000001 L479.8 588.7" stroke="#161616" stroke-width="1.3" stroke-dasharray="6.931 4.159" fill="none"/>
<text transform="translate(512.9 618.8) scale(0.9 1)" text-anchor="middle">CLASS II</text>
<path d="M480.8 626.5 L482.8 623.3 L510.5 623.3 L512.9 620.8 L515.3 623.3 L543.2 623.3 L545.1 626.5" stroke="#555" stroke-width="1.2" fill="none"/>
<path d="M489 630.5 Q490.5 634 494 634 Q497.5 634 499 630.5" stroke="#333" stroke-width="1" fill="none"/>
<path d="M527 630.5 Q528.5 634 532 634 Q535.5 634 537 630.5" stroke="#333" stroke-width="1" fill="none"/>
<text transform="translate(480.1 641.2) scale(0.9 1)">B8</text>
<text transform="translate(475.8 652.7) scale(0.9 1)">PPL</text>
<text transform="translate(519.1 641.2) scale(0.9 1)">B9</text>
<text transform="translate(516 652.7) scale(0.9 1)">PPL</text>
<text transform="translate(537.9 639.7) scale(0.9 1)" text-decoration="underline">C2</text>
<path d="M880.5 655.4 L878.1 658.2 L877.9 661.2 L880.5 664.6" stroke="#3a3a3a" stroke-width="1.1" fill="none"/>
<text transform="translate(843.2 656.8) scale(0.9 1)">PPL</text>
<text transform="translate(869.5 654.5) scale(0.9 1)">2</text>
<text transform="translate(884 656.8) scale(0.9 1)">DATA LINK</text>
<text transform="translate(884 665.6) scale(0.9 1)">CONNECTOR</text>
<text transform="translate(884 674.4) scale(0.9 1)">(LEFT SIDE</text>
<text transform="translate(884 683.2) scale(0.9 1)">OF DASH)</text>
<path d="M803.5 782.5 L803.5 792.5" stroke="#555" stroke-width="1" fill="none"/>
<path d="M806.0 784.0 L806.0 791.0" stroke="#555" stroke-width="1" fill="none"/>
<path d="M808.5 785.5 L808.5 789.5" stroke="#555" stroke-width="1" fill="none"/>
<text transform="translate(678 798.7) scale(0.9 1)">S171</text>
<text transform="translate(717.5 784.6) scale(0.9 1)">BLK/WHT</text>
<text transform="translate(726 810) scale(0.9 1)">TAN/WHT</text>
<text transform="translate(814.8 788.4) scale(0.9 1)">G115</text>
<text transform="translate(814.8 797.2) scale(0.9 1)">(REAR OF</text>
<text transform="translate(814.8 806.0) scale(0.9 1)">ENGINE)</text>
</g>
</svg>
</body></html>
